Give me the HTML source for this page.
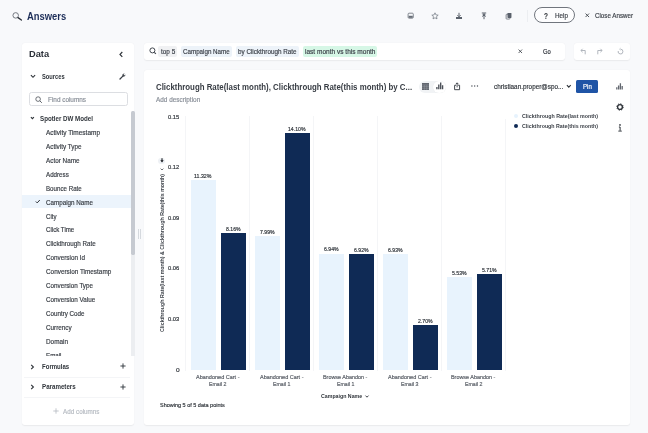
<!DOCTYPE html>
<html lang="en"><head><meta charset="utf-8"><title>Answers</title>
<style>
*{box-sizing:border-box;margin:0;padding:0}
html,body{width:648px;height:433px;overflow:hidden}
body{background:#f8f9fb;font-family:"Liberation Sans","DejaVu Sans",sans-serif;color:#3a3f46;position:relative;font-size:7px}
.a{position:absolute;white-space:nowrap;line-height:1;-webkit-text-stroke:0.18px currentColor}
#root{position:absolute;left:0;top:0;width:648px;height:433px;will-change:transform;opacity:0.999;filter:blur(0.35px)}
.card{position:absolute;background:#fff;border-radius:3px}
.chip{position:absolute;top:46.4px;height:10.8px;border-radius:2px;background:#edf3f9}
.bar{position:absolute;width:24.5px}
.l{background:#e8f3fd}
.d{background:#0f2a55}
.vl{position:absolute;width:1px;background:#f4f5f7}
svg{position:absolute;overflow:visible}
</style></head><body><div id="root">
<svg style="left:12px;top:10.5px" width="11" height="11" viewBox="0 0 11 11"><circle cx="3.7" cy="4.4" r="2.75" fill="none" stroke="#6d727a" stroke-width="0.95"/><path d="M6 6.6 L9.4 9" stroke="#2b3038" stroke-width="1.35" stroke-linecap="round"/></svg>
<div class="a" id="answers" style="left:26.80px;top:11.80px;font-size:10.0px;font-weight:bold;-webkit-text-stroke:0;color:#1c2d58;transform:scaleX(0.940);transform-origin:0 50%;">Answers</div>
<svg style="left:406.6px;top:12.2px" width="7.4" height="7.4" viewBox="0 0 8 8"><rect x="1.2" y="1.3" width="5.6" height="5.4" rx="1" fill="none" stroke="#666c75" stroke-width="0.85"/><rect x="1.8" y="4.1" width="4.4" height="2.2" fill="#666c75"/></svg>
<svg style="left:431px;top:12px" width="8" height="8" viewBox="0 0 8 8"><path d="M4 0.8 L4.95 2.9 L7.2 3.15 L5.5 4.65 L6 6.9 L4 5.75 L2 6.9 L2.5 4.65 L0.8 3.15 L3.05 2.9 Z" fill="none" stroke="#6a717b" stroke-width="0.7" stroke-linejoin="round"/></svg>
<svg style="left:455px;top:12px" width="8" height="8" viewBox="0 0 8 8"><path d="M4 0.8 V4.6 M2.4 3.2 L4 4.8 L5.6 3.2" fill="none" stroke="#5a616b" stroke-width="1"/><path d="M1 5 H7 V7 H1 Z" fill="#5a616b"/></svg>
<svg style="left:479.5px;top:12px" width="8" height="8" viewBox="0 0 8 8"><path d="M1.8 1 H6.2 M4 1.2 V7.2 M2.4 4.6 L4 3 L5.6 4.6" fill="none" stroke="#5a616b" stroke-width="1"/><path d="M2.6 2.2 H5.4 V3.6 H2.6 Z" fill="#5a616b"/></svg>
<svg style="left:504.6px;top:11.7px" width="7.6" height="8" viewBox="0 0 8 8"><rect x="2.6" y="0.8" width="4.2" height="5.2" rx="0.6" fill="#5a616b"/><rect x="1.2" y="2.2" width="4" height="5" rx="0.6" fill="none" stroke="#5a616b" stroke-width="0.8"/></svg>
<div class="a" style="left:526.5px;top:10px;width:1px;height:11.5px;background:#eceef1"></div>
<div class="a" id="help" style="left:534px;top:7.4px;width:41.2px;height:16px;border:0.75px solid #70757d;border-radius:8px;background:#fdfdfe"></div>
<div class="a" id="q" style="left:544.00px;top:11.63px;font-size:8.4px;font-weight:bold;-webkit-text-stroke:0;color:#30353b;transform:scaleX(0.780);transform-origin:0 50%;">?</div>
<div class="a" id="helpt" style="left:554.50px;top:11.96px;font-size:7.2px;color:#3a3f46;transform:scaleX(0.879);transform-origin:0 50%;">Help</div>
<svg style="left:584.7px;top:13.4px" width="4.6" height="4.6" viewBox="0 0 5 5"><path d="M0.6 0.6 L4.4 4.4 M4.4 0.6 L0.6 4.4" stroke="#3a3f46" stroke-width="0.95"/></svg>
<div class="a" id="closet" style="left:595.00px;top:11.96px;font-size:7.2px;color:#3a3f46;transform:scaleX(0.865);transform-origin:0 50%;">Close Answer</div>
<div class="card" id="lp" style="left:22px;top:43px;width:112px;height:381.5px;box-shadow:0 0.5px 1.5px rgba(0,0,0,0.07)"></div>
<div class="a" id="data" style="left:28.70px;top:49.11px;font-size:9.6px;font-weight:bold;-webkit-text-stroke:0;color:#2b3038;transform:scaleX(0.966);transform-origin:0 50%;">Data</div>
<svg style="left:117.5px;top:50.7px" width="6" height="7" viewBox="0 0 6 7"><path d="M4.3 1 L2 3.4 L4.3 5.8" fill="none" stroke="#30353b" stroke-width="1.2"/></svg>
<svg style="left:29.5px;top:73.7px" width="6" height="5" viewBox="0 0 6 5"><path d="M0.9 1.2 L3 3.3 L5.1 1.2" fill="none" stroke="#30353b" stroke-width="1.15"/></svg>
<div class="a" id="sources" style="left:41.80px;top:73.76px;font-size:6.8px;font-weight:bold;-webkit-text-stroke:0;color:#30353b;transform:scaleX(0.846);transform-origin:0 50%;">Sources</div>
<svg style="left:119px;top:72.8px" width="7" height="7" viewBox="0 0 7 7"><path d="M1 6 L3.6 3.4" stroke="#3a3f46" stroke-width="1.3" stroke-linecap="round"/><path d="M3.2 2.6 A1.9 1.9 0 0 1 5.6 0.7 L4.5 1.8 L5.2 2.5 L6.3 1.4 A1.9 1.9 0 0 1 4.4 3.8 Z" fill="#3a3f46"/></svg>
<div class="a" id="find" style="left:28.8px;top:92.3px;width:98.8px;height:13.4px;border:0.8px solid #dcdee2;border-radius:2.5px;background:#fff"></div>
<svg style="left:35.1px;top:95.5px" width="8" height="8" viewBox="0 0 8 8"><circle cx="3.1" cy="3.1" r="2.3" fill="none" stroke="#4a4f57" stroke-width="0.8"/><path d="M4.9 4.9 L6.8 6.8" stroke="#4a4f57" stroke-width="0.9"/></svg>
<div class="a" id="findt" style="left:48.30px;top:96.86px;font-size:6.8px;color:#8a9099;transform:scaleX(0.940);transform-origin:0 50%;">Find columns</div>
<svg style="left:29.6px;top:116.4px" width="6" height="5" viewBox="0 0 6 5"><path d="M0.9 1.2 L2.4 2.7 L3.9 1.2" fill="none" stroke="#30353b" stroke-width="1.15"/></svg>
<div class="a" id="model" style="left:40.00px;top:115.66px;font-size:6.8px;font-weight:bold;-webkit-text-stroke:0;color:#30353b;transform:scaleX(0.911);transform-origin:0 50%;">Spotler DW Model</div>
<div class="a" style="left:22px;top:194.8px;width:109.2px;height:12.8px;background:#ecf4fc"></div>
<svg style="left:35.2px;top:199.2px" width="6" height="5" viewBox="0 0 6 5"><path d="M0.8 2.5 L2.2 3.9 L4.8 1" fill="none" stroke="#30353b" stroke-width="1"/></svg>
<div class="a" id="it0" style="left:46.00px;top:130.01px;font-size:6.9px;color:#373c43;transform:scaleX(0.940);transform-origin:0 50%;">Activity Timestamp</div>
<div class="a" id="it1" style="left:46.00px;top:143.93px;font-size:6.9px;color:#373c43;transform:scaleX(0.921);transform-origin:0 50%;">Activity Type</div>
<div class="a" id="it2" style="left:46.00px;top:157.85px;font-size:6.9px;color:#373c43;transform:scaleX(0.921);transform-origin:0 50%;">Actor Name</div>
<div class="a" id="it3" style="left:46.00px;top:171.76px;font-size:6.9px;color:#373c43;transform:scaleX(0.900);transform-origin:0 50%;">Address</div>
<div class="a" id="it4" style="left:46.00px;top:185.68px;font-size:6.9px;color:#373c43;transform:scaleX(0.897);transform-origin:0 50%;">Bounce Rate</div>
<div class="a" id="it5" style="left:46.00px;top:199.60px;font-size:6.9px;color:#373c43;transform:scaleX(0.909);transform-origin:0 50%;">Campaign Name</div>
<div class="a" id="it6" style="left:46.00px;top:213.51px;font-size:6.9px;color:#373c43;transform:scaleX(0.884);transform-origin:0 50%;">City</div>
<div class="a" id="it7" style="left:46.00px;top:227.43px;font-size:6.9px;color:#373c43;transform:scaleX(0.889);transform-origin:0 50%;">Click Time</div>
<div class="a" id="it8" style="left:46.00px;top:241.35px;font-size:6.9px;color:#373c43;transform:scaleX(0.908);transform-origin:0 50%;">Clickthrough Rate</div>
<div class="a" id="it9" style="left:46.00px;top:255.26px;font-size:6.9px;color:#373c43;transform:scaleX(0.917);transform-origin:0 50%;">Conversion Id</div>
<div class="a" id="it10" style="left:46.00px;top:269.18px;font-size:6.9px;color:#373c43;transform:scaleX(0.926);transform-origin:0 50%;">Conversion Timestamp</div>
<div class="a" id="it11" style="left:46.00px;top:283.10px;font-size:6.9px;color:#373c43;transform:scaleX(0.911);transform-origin:0 50%;">Conversion Type</div>
<div class="a" id="it12" style="left:46.00px;top:297.02px;font-size:6.9px;color:#373c43;transform:scaleX(0.914);transform-origin:0 50%;">Conversion Value</div>
<div class="a" id="it13" style="left:46.00px;top:310.93px;font-size:6.9px;color:#373c43;transform:scaleX(0.906);transform-origin:0 50%;">Country Code</div>
<div class="a" id="it14" style="left:46.00px;top:324.85px;font-size:6.9px;color:#373c43;transform:scaleX(0.919);transform-origin:0 50%;">Currency</div>
<div class="a" id="it15" style="left:46.00px;top:338.77px;font-size:6.9px;color:#373c43;transform:scaleX(0.926);transform-origin:0 50%;">Domain</div>
<div class="a" id="it16" style="left:46.00px;top:352.68px;font-size:6.9px;color:#373c43;transform:scaleX(0.899);transform-origin:0 50%;">Email</div>
<div class="a" style="left:22px;top:356.3px;width:112px;height:68px;background:#fff;border-radius:0 0 3px 3px"></div>
<div class="a" style="left:131.2px;top:111px;width:3.4px;height:144px;background:#c6cad1;border-radius:1.5px"></div>
<div class="a" style="left:131.2px;top:255px;width:3.4px;height:101.3px;background:#eceef1"></div>
<svg style="left:29.8px;top:363.5px" width="5" height="6" viewBox="0 0 5 6"><path d="M1.2 0.8 L3.4 3 L1.2 5.2" fill="none" stroke="#30353b" stroke-width="1.15"/></svg>
<div class="a" id="formulas" style="left:41.80px;top:363.76px;font-size:6.8px;font-weight:bold;-webkit-text-stroke:0;color:#30353b;transform:scaleX(0.889);transform-origin:0 50%;">Formulas</div>
<svg style="left:119.7px;top:363.4px" width="6" height="6" viewBox="0 0 6 6"><path d="M3 0.4 V5.6 M0.4 3 H5.6" stroke="#363b42" stroke-width="0.95"/></svg>
<div class="a" style="left:24px;top:376.5px;width:106px;height:1px;background:#f4f5f7"></div>
<svg style="left:29.8px;top:384px" width="5" height="6" viewBox="0 0 5 6"><path d="M1.2 0.8 L3.4 3 L1.2 5.2" fill="none" stroke="#30353b" stroke-width="1.15"/></svg>
<div class="a" id="params" style="left:41.80px;top:384.36px;font-size:6.8px;font-weight:bold;-webkit-text-stroke:0;color:#30353b;transform:scaleX(0.910);transform-origin:0 50%;">Parameters</div>
<svg style="left:119.7px;top:384px" width="6" height="6" viewBox="0 0 6 6"><path d="M3 0.4 V5.6 M0.4 3 H5.6" stroke="#363b42" stroke-width="0.95"/></svg>
<div class="a" style="left:24px;top:396.8px;width:106px;height:1px;background:#f4f5f7"></div>
<svg style="left:53.2px;top:408.3px" width="6" height="6" viewBox="0 0 6 6"><path d="M3 0.3 V5.7 M0.3 3 H5.7" stroke="#b4b9c0" stroke-width="0.8"/></svg>
<div class="a" id="addc" style="left:63.40px;top:408.66px;font-size:6.8px;color:#b6bbc2;transform:scaleX(0.929);transform-origin:0 50%;">Add columns</div>
<div class="a" style="left:137.6px;top:228.5px;width:0.8px;height:10px;background:#d5d9de"></div>
<div class="a" style="left:139.6px;top:228.5px;width:0.8px;height:10px;background:#d5d9de"></div>
<div class="card" id="sb" style="left:144px;top:43px;width:420.5px;height:17.3px;box-shadow:0 0.5px 1.5px rgba(0,0,0,0.07)"></div>
<svg style="left:148.5px;top:47.3px" width="9" height="9" viewBox="0 0 9 9"><circle cx="3.4" cy="3.4" r="2.5" fill="none" stroke="#42474f" stroke-width="1"/><path d="M5.3 5.3 L6.9 6.9" stroke="#42474f" stroke-width="1.1"/></svg>
<div class="chip" style="left:158.3px;width:18.5px;background:#f0f1f3"></div>
<div class="chip" style="left:181.2px;width:50.8px"></div>
<div class="chip" style="left:236.4px;width:62.4px"></div>
<div class="chip" style="left:302.5px;width:74.5px;background:#d6f7e6"></div>
<div class="a" id="c1" style="left:160.80px;top:49.11px;font-size:6.9px;color:#3c4149;transform:scaleX(0.926);transform-origin:0 50%;">top 5</div>
<div class="a" id="c2" style="left:183.30px;top:49.11px;font-size:6.9px;color:#3c4149;transform:scaleX(0.903);transform-origin:0 50%;">Campaign Name</div>
<div class="a" id="c3" style="left:238.30px;top:49.11px;font-size:6.9px;color:#3c4149;transform:scaleX(0.915);transform-origin:0 50%;">by Clickthrough Rate</div>
<div class="a" id="c4" style="left:304.50px;top:49.11px;font-size:6.9px;color:#3c4149;transform:scaleX(0.949);transform-origin:0 50%;">last month vs this month</div>
<svg style="left:517.8px;top:49.4px" width="4.6" height="4.6" viewBox="0 0 5 5"><path d="M0.6 0.6 L4.4 4.4 M4.4 0.6 L0.6 4.4" stroke="#3a3f46" stroke-width="0.9"/></svg>
<div class="a" id="go" style="left:542.50px;top:48.26px;font-size:7.2px;color:#2b3038;transform:scaleX(0.813);transform-origin:0 50%;">Go</div>
<div class="card" style="left:573.5px;top:43px;width:56.3px;height:17.3px;box-shadow:0 0.5px 1.5px rgba(0,0,0,0.07)"></div>
<svg style="left:579.5px;top:48.2px" width="7" height="7" viewBox="0 0 7 7"><path d="M2.6 0.8 L0.9 2.5 L2.6 4.2 M1 2.5 H5.2 V6.3" fill="none" stroke="#aeb3bb" stroke-width="0.95"/></svg>
<svg style="left:595.5px;top:48.2px" width="7" height="7" viewBox="0 0 7 7"><path d="M4.4 0.8 L6.1 2.5 L4.4 4.2 M6 2.5 H1.8 V6.3" fill="none" stroke="#aeb3bb" stroke-width="0.95"/></svg>
<svg style="left:616.7px;top:48px" width="7" height="7" viewBox="0 0 7 7"><path d="M3.5 1.2 A2.4 2.4 0 1 1 1.2 3" fill="none" stroke="#aeb3bb" stroke-width="0.95"/><path d="M3.8 0 L2.4 1.2 L3.8 2.4" fill="none" stroke="#c3c8cf" stroke-width="0.7"/></svg>
<div class="card" id="mc" style="left:144px;top:69.5px;width:486px;height:355.5px;box-shadow:0 0.5px 1.5px rgba(0,0,0,0.07)"></div>
<div class="a" id="title" style="left:155.80px;top:83.38px;font-size:8.3px;font-weight:bold;-webkit-text-stroke:0;color:#383d44;transform:scaleX(0.948);transform-origin:0 50%;">Clickthrough Rate(last month), Clickthrough Rate(this month) by C...</div>
<div class="a" id="adddesc" style="left:155.80px;top:96.72px;font-size:6.7px;color:#8a9099;transform:scaleX(0.959);transform-origin:0 50%;">Add description</div>
<div class="a" style="left:418.6px;top:80.6px;width:27.4px;height:12.8px;background:#f1f3f5;border-radius:6.4px"></div>
<div class="a" style="left:432.8px;top:80.6px;width:12.8px;height:12.8px;background:#fff;border-radius:50%;box-shadow:0 0 1px rgba(0,0,0,0.08)"></div>
<svg style="left:422px;top:83px" width="7" height="7" viewBox="0 0 7 7"><rect x="0" y="0" width="7" height="7" fill="#62676f"/><path d="M0 1.9 H7 M0 3.6 H7 M0 5.3 H7 M2.4 1.9 V7 M4.7 1.9 V7" stroke="#a4a9b0" stroke-width="0.35"/></svg>
<svg style="left:436px;top:82.2px" width="7.4" height="7.2" viewBox="0 0 7.4 7.2"><path d="M0.9 7.2 V4.9 M2.8 7.2 V2.6 M4.7 7.2 V0.4 M6.6 7.2 V3.2" stroke="#4a4f57" stroke-width="1.35"/></svg>
<svg style="left:454px;top:82.3px" width="6.2" height="8.2" viewBox="0 0 6.2 8.2"><path d="M2 3.3 H0.6 V7.7 H5.6 V3.3 H4.2" fill="none" stroke="#3a3f46" stroke-width="0.95"/><path d="M3.1 5.4 V1 M1.8 2.2 L3.1 0.8 L4.4 2.2" fill="none" stroke="#3a3f46" stroke-width="0.9"/></svg>
<svg style="left:470.6px;top:85.2px" width="7.4" height="2" viewBox="0 0 7.4 2"><circle cx="0.9" cy="1" r="0.7" fill="#4a4f57"/><circle cx="3.7" cy="1" r="0.7" fill="#4a4f57"/><circle cx="6.5" cy="1" r="0.7" fill="#4a4f57"/></svg>
<div class="a" id="user" style="left:494.00px;top:83.61px;font-size:6.9px;color:#30353b;transform:scaleX(0.922);transform-origin:0 50%;">christiaan.proper@spo...</div>
<svg style="left:566px;top:84.3px" width="6" height="5" viewBox="0 0 6 5"><path d="M0.9 1.2 L2.8 3.1 L4.7 1.2" fill="none" stroke="#30353b" stroke-width="1.15"/></svg>
<div class="a" id="pin" style="left:575.8px;top:79.5px;width:22.6px;height:13.4px;background:#1f54a6;border-radius:1.5px"></div>
<div class="a" id="pint" style="left:583.00px;top:83.06px;font-size:7px;color:#fff;transform:scaleX(0.869);transform-origin:0 50%;">Pin</div>
<svg style="left:616.2px;top:82.8px" width="7" height="6.4" viewBox="0 0 7 6.4"><path d="M0.8 6.4 V4.3 M2.6 6.4 V2.4 M4.4 6.4 V0.3 M6.2 6.4 V2.9" stroke="#62676f" stroke-width="1.3"/></svg>
<svg style="left:616px;top:103px" width="8" height="8" viewBox="0 0 8 8"><circle cx="4" cy="4" r="2.4" fill="none" stroke="#30353b" stroke-width="1.4"/><circle cx="4" cy="4" r="3.2" fill="none" stroke="#30353b" stroke-width="1" stroke-dasharray="1.25 1.25"/></svg>
<svg style="left:618.2px;top:124px" width="4" height="8" viewBox="0 0 4 8"><circle cx="2" cy="0.9" r="0.85" fill="#30353b"/><path d="M0.9 3 H2.1 V6.8" fill="none" stroke="#30353b" stroke-width="1"/><path d="M0.3 7.1 H3.8" stroke="#30353b" stroke-width="0.9"/></svg>
<div class="vl" style="left:185px;top:116px;height:254.5px"></div>
<div class="vl" style="left:249px;top:116px;height:254.5px"></div>
<div class="vl" style="left:313px;top:116px;height:254.5px"></div>
<div class="vl" style="left:377px;top:116px;height:254.5px"></div>
<div class="vl" style="left:441px;top:116px;height:254.5px"></div>
<div class="vl" style="left:505px;top:118.5px;height:252.0px"></div>
<div class="a" id="y0" style="left:168.00px;top:114.94px;font-size:5.7px;color:#30353b;transform:scaleX(1.020);transform-origin:0 50%;">0.15</div>
<div class="a" id="y1" style="left:168.00px;top:165.34px;font-size:5.7px;color:#30353b;transform:scaleX(1.020);transform-origin:0 50%;">0.12</div>
<div class="a" id="y2" style="left:168.00px;top:215.74px;font-size:5.7px;color:#30353b;transform:scaleX(1.020);transform-origin:0 50%;">0.09</div>
<div class="a" id="y3" style="left:168.00px;top:266.44px;font-size:5.7px;color:#30353b;transform:scaleX(1.020);transform-origin:0 50%;">0.06</div>
<div class="a" id="y4" style="left:168.00px;top:316.84px;font-size:5.7px;color:#30353b;transform:scaleX(1.020);transform-origin:0 50%;">0.03</div>
<div class="a" id="y5" style="left:175.60px;top:368.24px;font-size:5.7px;color:#30353b;transform:scaleX(1.150);transform-origin:0 50%;">0</div>
<div class="bar l" style="left:191.0px;top:180.0px;height:190.4px"></div>
<div class="a" id="p00" style="left:194.20px;top:173.79px;font-size:5.6px;color:#30353b;transform:scaleX(0.943);transform-origin:0 50%;">11.32%</div>
<div class="bar d" style="left:221.0px;top:233.1px;height:137.3px"></div>
<div class="a" id="p01" style="left:225.65px;top:226.94px;font-size:5.6px;color:#30353b;transform:scaleX(0.920);transform-origin:0 50%;">8.16%</div>
<div class="a" id="x0a" style="left:195.75px;top:375.49px;font-size:5.6px;color:#595e66;transform:scaleX(0.985);transform-origin:0 50%;">Abandoned Cart -</div>
<div class="a" id="x0b" style="left:208.75px;top:381.79px;font-size:5.6px;color:#595e66;transform:scaleX(0.938);transform-origin:0 50%;">Email 2</div>
<div class="bar l" style="left:255.0px;top:236.0px;height:134.4px"></div>
<div class="a" id="p10" style="left:259.65px;top:229.80px;font-size:5.6px;color:#30353b;transform:scaleX(0.920);transform-origin:0 50%;">7.99%</div>
<div class="bar d" style="left:285.0px;top:133.2px;height:237.2px"></div>
<div class="a" id="p11" style="left:288.20px;top:127.03px;font-size:5.6px;color:#30353b;transform:scaleX(0.922);transform-origin:0 50%;">14.10%</div>
<div class="a" id="x1a" style="left:259.75px;top:375.49px;font-size:5.6px;color:#595e66;transform:scaleX(0.985);transform-origin:0 50%;">Abandoned Cart -</div>
<div class="a" id="x1b" style="left:272.75px;top:381.79px;font-size:5.6px;color:#595e66;transform:scaleX(0.938);transform-origin:0 50%;">Email 1</div>
<div class="bar l" style="left:319.0px;top:253.7px;height:116.7px"></div>
<div class="a" id="p20" style="left:323.65px;top:247.46px;font-size:5.6px;color:#30353b;transform:scaleX(0.920);transform-origin:0 50%;">6.94%</div>
<div class="bar d" style="left:349.0px;top:254.0px;height:116.4px"></div>
<div class="a" id="p21" style="left:353.65px;top:247.79px;font-size:5.6px;color:#30353b;transform:scaleX(0.920);transform-origin:0 50%;">6.92%</div>
<div class="a" id="x2a" style="left:323.35px;top:375.49px;font-size:5.6px;color:#595e66;transform:scaleX(0.969);transform-origin:0 50%;">Browse Abandon -</div>
<div class="a" id="x2b" style="left:336.75px;top:381.79px;font-size:5.6px;color:#595e66;transform:scaleX(0.938);transform-origin:0 50%;">Email 1</div>
<div class="bar l" style="left:383.0px;top:253.8px;height:116.6px"></div>
<div class="a" id="p30" style="left:387.65px;top:247.63px;font-size:5.6px;color:#30353b;transform:scaleX(0.920);transform-origin:0 50%;">6.93%</div>
<div class="bar d" style="left:413.0px;top:325.0px;height:45.4px"></div>
<div class="a" id="p31" style="left:417.65px;top:318.77px;font-size:5.6px;color:#30353b;transform:scaleX(0.920);transform-origin:0 50%;">2.70%</div>
<div class="a" id="x3a" style="left:387.75px;top:375.49px;font-size:5.6px;color:#595e66;transform:scaleX(0.985);transform-origin:0 50%;">Abandoned Cart -</div>
<div class="a" id="x3b" style="left:400.75px;top:381.79px;font-size:5.6px;color:#595e66;transform:scaleX(0.938);transform-origin:0 50%;">Email 3</div>
<div class="bar l" style="left:447.0px;top:277.4px;height:93.0px"></div>
<div class="a" id="p40" style="left:451.65px;top:271.17px;font-size:5.6px;color:#30353b;transform:scaleX(0.920);transform-origin:0 50%;">5.53%</div>
<div class="bar d" style="left:477.0px;top:274.4px;height:96.0px"></div>
<div class="a" id="p41" style="left:481.65px;top:268.15px;font-size:5.6px;color:#30353b;transform:scaleX(0.920);transform-origin:0 50%;">5.71%</div>
<div class="a" id="x4a" style="left:451.35px;top:375.49px;font-size:5.6px;color:#595e66;transform:scaleX(0.969);transform-origin:0 50%;">Browse Abandon -</div>
<div class="a" id="x4b" style="left:464.75px;top:381.79px;font-size:5.6px;color:#595e66;transform:scaleX(0.938);transform-origin:0 50%;">Email 2</div>
<div class="a" id="xt" style="left:320.80px;top:394.24px;font-size:5.7px;font-weight:bold;-webkit-text-stroke:0;color:#30353b;transform:scaleX(0.924);transform-origin:0 50%;">Campaign Name</div>
<svg style="left:364.6px;top:394.8px" width="4" height="3" viewBox="0 0 4 3"><path d="M0.5 0.6 L2 2.2 L3.5 0.6" fill="none" stroke="#30353b" stroke-width="0.9"/></svg>
<div class="a" id="showing" style="left:159.50px;top:403.24px;font-size:5.7px;color:#30353b;transform:scaleX(0.966);transform-origin:0 50%;">Showing 5 of 5 data points</div>
<div class="a" style="left:161.7px;top:253px;width:0;height:0;transform:rotate(-90deg)"><div class="a" id="yt" style="left:-79.00px;top:-2.06px;font-size:5.7px;font-weight:bold;-webkit-text-stroke:0;color:#40454c;transform:scaleX(0.926);transform-origin:0 50%;">Clickthrough Rate(last month) &amp; Clickthrough Rate(this month)</div>
</div>
<svg style="left:159.8px;top:167.5px" width="4" height="3" viewBox="0 0 4 3"><path d="M0.6 0.6 L2 2 L3.4 0.6" fill="none" stroke="#30353b" stroke-width="0.7"/></svg>
<div class="a" style="left:158.4px;top:157.5px;width:6.6px;height:6.6px;border-radius:50%;background:#eef1f5"></div>
<svg style="left:159.7px;top:158.3px" width="4" height="5" viewBox="0 0 4 5"><path d="M2 0.3 V3.2" stroke="#1c1f24" stroke-width="1.1"/><path d="M0.3 2.3 L2 4.6 L3.7 2.3 Z" fill="#1c1f24"/></svg>
<div class="a" style="left:514px;top:113.6px;width:4.4px;height:4.4px;border-radius:50%;background:#e6f2fd"></div>
<div class="a" style="left:514px;top:124.1px;width:4.4px;height:4.4px;border-radius:50%;background:#0f2a55"></div>
<div class="a" id="lg1" style="left:522.00px;top:113.79px;font-size:5.6px;font-weight:bold;-webkit-text-stroke:0;color:#3d4249;transform:scaleX(0.948);transform-origin:0 50%;">Clickthrough Rate(last month)</div>
<div class="a" id="lg2" style="left:522.00px;top:124.29px;font-size:5.6px;font-weight:bold;-webkit-text-stroke:0;color:#3d4249;transform:scaleX(0.944);transform-origin:0 50%;">Clickthrough Rate(this month)</div>
</div></body></html>
